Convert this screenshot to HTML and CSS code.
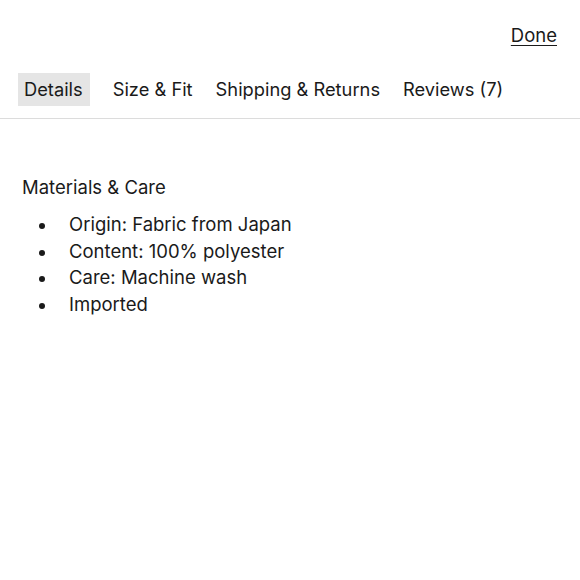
FILE: index.html
```html
<!DOCTYPE html>
<html lang="en">
<head>
  <meta charset="utf-8">
  <meta name="viewport" content="width=device-width, initial-scale=1">
  <title>Product Details</title>
  <link rel="stylesheet" href="styles.css">
</head>
<body>
  <div class="topbar">
    <a class="done" href="#">Done</a>
  </div>
  <nav class="tabs">
    <span class="tab active">Details</span>
    <span class="tab">Size &amp; Fit</span>
    <span class="tab">Shipping &amp; Returns</span>
    <span class="tab">Reviews (7)</span>
  </nav>
  <div class="panel">
    <h4 class="heading">Materials &amp; Care</h4>
    <ul class="list">
      <li>Origin: Fabric from Japan</li>
      <li>Content: 100% polyester</li>
      <li>Care: Machine wash</li>
      <li>Imported</li>
    </ul>
  </div>
</body>
</html>
```

FILE: styles.css
```css
body {
  margin: 0;
  font-family: Inter, "Noto Sans", sans-serif;
  color: #1a1a1a;
  background: #fff;
}
.topbar {
  display: flex;
  justify-content: flex-end;
  padding: 24px 23px 0 0;
  height: 51px;
  box-sizing: border-box;
}
.done {
  color: #1a1a1a;
  font-size: 18.5px;
  text-decoration: underline;
  text-underline-offset: 3px;
}
.tabs {
  display: flex;
  gap: 11px;
  padding: 22px 18px 12px;
  border-bottom: 1px solid #dcdcdc;
}
.tab {
  font-size: 18.3px;
  padding: 6px 6px;
  line-height: 21px;
}
.active {
  background: #e5e5e5;
  padding: 6px 7px 6px 6px;
  margin-right: 6px;
}
.panel {
  padding: 57px 22px 0;
}
.heading {
  margin: 0 0 13px;
  font-size: 18.5px;
  font-weight: 400;
}
.list {
  margin: 0;
  padding: 0 0 0 17px;
  list-style: none;
  font-size: 18.5px;
  line-height: 26.5px;
}
.list li {
  display: flex;
  align-items: center;
  gap: 24px;
}
.list li::before {
  content: "";
  width: 6px;
  height: 6px;
  margin-top: 4px;
  border-radius: 50%;
  background: #1a1a1a;
}
```
